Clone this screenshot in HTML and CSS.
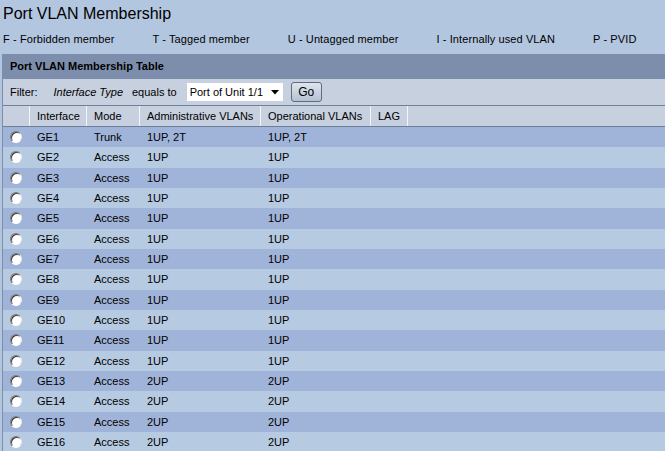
FILE: index.html
```html
<!DOCTYPE html>
<html>
<head>
<meta charset="utf-8">
<link rel="stylesheet" href="styles.css">
</head>
<body>
<h1 class="title">Port VLAN Membership</h1>
<div class="legend">
  <span>F - Forbidden member</span>
  <span>T - Tagged member</span>
  <span>U - Untagged member</span>
  <span>I - Internally used VLAN</span>
  <span>P - PVID</span>
</div>
<div class="panel">
  <div class="panel-head">Port VLAN Membership Table</div>
  <div class="filter">
    <span class="f-label">Filter:</span>
    <span class="f-field">Interface Type</span>
    <span class="f-op">equals to</span>
    <div class="select"><span>Port of Unit 1/1</span><svg class="arrow" width="8" height="5" viewBox="0 0 8 5"><path d="M0 0H8L4 4.5Z" fill="#000"/></svg></div>
    <button class="go">Go</button>
  </div>
  <div class="grid head">
    <div class="c0"></div>
    <div class="c">Interface</div>
    <div class="c">Mode</div>
    <div class="c">Administrative VLANs</div>
    <div class="c">Operational VLANs</div>
    <div class="c">LAG</div>
    <div class="c last"></div>
  </div>
  <div class="rows">
    <div class="grid row"><div class="c0"><span class="radio"></span></div><div class="c">GE1</div><div class="c">Trunk</div><div class="c">1UP, 2T</div><div class="c">1UP, 2T</div><div class="c"></div><div class="c"></div></div>
    <div class="grid row"><div class="c0"><span class="radio"></span></div><div class="c">GE2</div><div class="c">Access</div><div class="c">1UP</div><div class="c">1UP</div><div class="c"></div><div class="c"></div></div>
    <div class="grid row"><div class="c0"><span class="radio"></span></div><div class="c">GE3</div><div class="c">Access</div><div class="c">1UP</div><div class="c">1UP</div><div class="c"></div><div class="c"></div></div>
    <div class="grid row"><div class="c0"><span class="radio"></span></div><div class="c">GE4</div><div class="c">Access</div><div class="c">1UP</div><div class="c">1UP</div><div class="c"></div><div class="c"></div></div>
    <div class="grid row"><div class="c0"><span class="radio"></span></div><div class="c">GE5</div><div class="c">Access</div><div class="c">1UP</div><div class="c">1UP</div><div class="c"></div><div class="c"></div></div>
    <div class="grid row"><div class="c0"><span class="radio"></span></div><div class="c">GE6</div><div class="c">Access</div><div class="c">1UP</div><div class="c">1UP</div><div class="c"></div><div class="c"></div></div>
    <div class="grid row"><div class="c0"><span class="radio"></span></div><div class="c">GE7</div><div class="c">Access</div><div class="c">1UP</div><div class="c">1UP</div><div class="c"></div><div class="c"></div></div>
    <div class="grid row"><div class="c0"><span class="radio"></span></div><div class="c">GE8</div><div class="c">Access</div><div class="c">1UP</div><div class="c">1UP</div><div class="c"></div><div class="c"></div></div>
    <div class="grid row"><div class="c0"><span class="radio"></span></div><div class="c">GE9</div><div class="c">Access</div><div class="c">1UP</div><div class="c">1UP</div><div class="c"></div><div class="c"></div></div>
    <div class="grid row"><div class="c0"><span class="radio"></span></div><div class="c">GE10</div><div class="c">Access</div><div class="c">1UP</div><div class="c">1UP</div><div class="c"></div><div class="c"></div></div>
    <div class="grid row"><div class="c0"><span class="radio"></span></div><div class="c">GE11</div><div class="c">Access</div><div class="c">1UP</div><div class="c">1UP</div><div class="c"></div><div class="c"></div></div>
    <div class="grid row"><div class="c0"><span class="radio"></span></div><div class="c">GE12</div><div class="c">Access</div><div class="c">1UP</div><div class="c">1UP</div><div class="c"></div><div class="c"></div></div>
    <div class="grid row"><div class="c0"><span class="radio"></span></div><div class="c">GE13</div><div class="c">Access</div><div class="c">2UP</div><div class="c">2UP</div><div class="c"></div><div class="c"></div></div>
    <div class="grid row"><div class="c0"><span class="radio"></span></div><div class="c">GE14</div><div class="c">Access</div><div class="c">2UP</div><div class="c">2UP</div><div class="c"></div><div class="c"></div></div>
    <div class="grid row"><div class="c0"><span class="radio"></span></div><div class="c">GE15</div><div class="c">Access</div><div class="c">2UP</div><div class="c">2UP</div><div class="c"></div><div class="c"></div></div>
    <div class="grid row"><div class="c0"><span class="radio"></span></div><div class="c">GE16</div><div class="c">Access</div><div class="c">2UP</div><div class="c">2UP</div><div class="c"></div><div class="c"></div></div>
  </div>
</div>
</body>
</html>
```
FILE: styles.css
```css
html, body {
  margin: 0;
  padding: 0;
}
body {
  background: #b3c6df;
  font-family: "Liberation Sans", Arial, sans-serif;
  font-size: 11px;
  color: #000;
  overflow: hidden;
  width: 665px;
}
.title {
  margin: 5px 0 0 3px;
  font-size: 16px;
  font-weight: normal;
  line-height: 18px;
}
.legend {
  display: flex;
  gap: 38px;
  margin-top: 10px;
  padding-left: 3px;
  line-height: 13px;
  letter-spacing: 0.1px;
  white-space: nowrap;
}
.panel {
  margin: 8px 0 0 2px;
  border-left: 1px solid #7f8ea6;
}
.panel-head {
  height: 25px;
  line-height: 25px;
  padding-left: 7px;
  background: #7d8eac;
  font-weight: bold;
}
.filter {
  height: 26px;
  display: flex;
  align-items: center;
  background: #c7d0de;
  padding-left: 7px;
  white-space: nowrap;
}
.f-field {
  font-style: italic;
  margin-left: 16px;
}
.f-op {
  margin-left: 9px;
}
.select {
  margin-left: 10px;
  width: 96px;
  height: 18px;
  box-sizing: border-box;
  background: #fff;
  display: flex;
  align-items: center;
  padding-left: 3px;
  font-size: 11px;
}
.select span {
  flex: 1;
}
.arrow {
  margin-right: 4px;
}
.go {
  margin-left: 8px;
  width: 31px;
  height: 20px;
  padding: 0;
  font-family: "Liberation Sans", Arial, sans-serif;
  font-size: 12px;
  color: #000;
  border: 1px solid #5e6c80;
  border-radius: 3px;
  background: linear-gradient(#dfe5ee, #b5c1d2);
}
.grid {
  display: grid;
  grid-template-columns: 26px 57px 53px 121px 110px 37px 1fr;
}
.head {
  height: 20px;
  background: #c7d0de;
  border-top: 1px solid #6f7f98;
  border-bottom: 1px solid #6f7f98;
  line-height: 20px;
}
.head .c {
  border-left: 1px solid #f2f4f8;
  padding-left: 7px;
  white-space: nowrap;
}
.head .last {
  border-left: 1px solid #f2f4f8;
}
.row {
  height: 20.33px;
  line-height: 20px;
  background: #a0b4d9;
}
.row:nth-child(even) {
  background: #b6cbe1;
}
.row .c {
  padding-left: 8px;
  white-space: nowrap;
}
.c0 {
  display: flex;
  align-items: center;
  padding-left: 7px;
}
.radio {
  width: 12px;
  height: 12px;
  box-sizing: border-box;
  border-radius: 50%;
  background: #fff;
  border: 1px solid;
  border-color: #7a7a7a #e8e8e8 #ffffff #7a7a7a;
  box-shadow: inset 1px 1px 0 #3a3a3a;
}
```
